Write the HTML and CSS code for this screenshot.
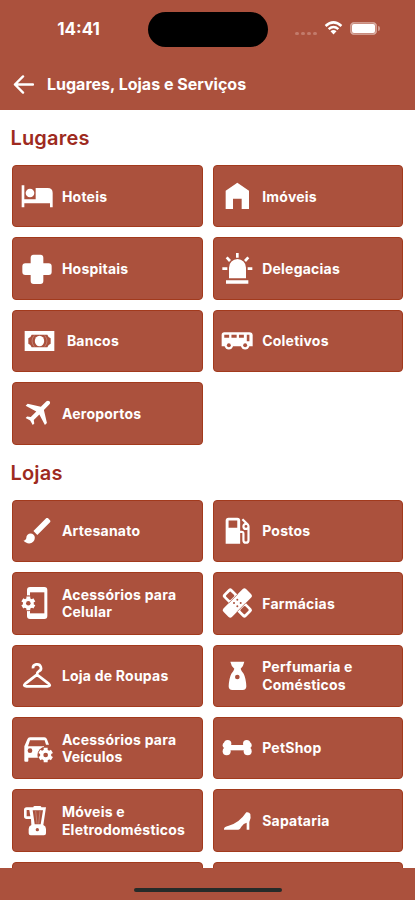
FILE: index.html
```html
<!DOCTYPE html>
<html lang="pt-BR">
<head>
    <meta charset="UTF-8" />
    <meta name="viewport" content="width=device-width, initial-scale=1" />
    <title>Lugares, Lojas e Serviços</title>
    <link rel="stylesheet" href="styles.css">
</head>
<body>
    <svg class="defs" width="0" height="0">
        <symbol id="gear" viewBox="-24 -24 48 48">
            <circle r="23" class="hole" />
            <g class="teeth">
                <path d="M0-20V20" />
                <path d="M-17.300-10L17.300 10" />
                <path d="M-17.300 10L17.300-10" />
            </g>
            <circle r="15.500" />
            <circle r="6.500" class="hole" />
        </symbol>
    </svg>

    <header>
        <div class="status">
            <span class="time">14:41</span>
            <span class="island"></span>
            <div class="signals">
                <span class="dots"><i></i><i></i><i></i><i></i></span>
                <svg class="wifi" viewBox="0 0 20 15">
                    <path d="M1.500 5.300Q10-2.300 18.500 5.300M4.800 8.700Q10 4.200 15.200 8.700" fill="none" stroke="#fff" stroke-width="2.700" />
                    <path d="M6.800 11Q10 8.300 13.200 11L10 14.500Z" />
                </svg>
                <span class="battery"></span>
            </div>
        </div>
        <div class="title-bar">
            <svg class="back" viewBox="0 0 22 20">
                <path d="M21 10H2M10.500 1.500L2 10l8.500 8.500" />
            </svg>
            <h1>Lugares, Lojas e Serviços</h1>
        </div>
    </header>

    <main>
        <h2>Lugares</h2>
        <div class="grid">
            <a class="card">
                <svg class="icon" viewBox="0 0 96 96"><path d="M2 16h8v42h34V24h36q15 0 15 15v43h-8V70H10v12H2Z" /><circle cx="27" cy="39" r="13" /></svg>
                <span>Hoteis</span>
            </a>
            <a class="card">
                <svg class="icon" viewBox="0 0 96 96"><path d="M14 32L49 8l35 24v55H62V56H36v31H14Z" /></svg>
                <span>Imóveis</span>
            </a>
            <a class="card">
                <svg class="icon" viewBox="0 0 96 96"><path d="M38 5h20q9 0 9 9v17h16q9 0 9 9v17q0 9-9 9H67v18q0 9-9 9H38q-9 0-9-9V66H13q-9 0-9-9V40q0-9 9-9h16V14q0-9 9-9Z" /></svg>
                <span>Hospitais</span>
            </a>
            <a class="card">
                <svg class="icon" viewBox="0 0 96 96">
                    <path d="M15 82h67v10H15ZM24 76V44a25.500 26 0 0 1 51 0v32ZM45 0h8v14h-8ZM4 43h15v8H4ZM80 43h14v8H80Z" />
                    <path class="line" d="M17 13l10 11M82 13L72 24" />
                </svg>
                <span>Delegacias</span>
            </a>
            <a class="card">
                <svg class="icon wide" viewBox="0 0 111 96">
                    <path d="M11 18h89v60H11Z" />
                    <path class="hole" d="M32 29h47q3 9 10 11v16q-7 2-10 11H32q-3-9-10-11V40q7-2 10-11Z" />
                    <path class="thin faint" d="M40 31q-14 17 0 34M71 31q14 17 0 34" />
                    <ellipse cx="55.500" cy="48" rx="14" ry="16" />
                </svg>
                <span>Bancos</span>
            </a>
            <a class="card">
                <svg class="icon" viewBox="0 0 98 96">
                    <path d="M10 21h77q10 0 10 10v33H2V29q0-8 8-8Z" />
                    <circle cx="24" cy="61" r="13" /><circle cx="74" cy="61" r="13" />
                    <path class="hole" d="M10 29h15v9H10ZM32 29h16v9H32ZM55 29h15v9H55ZM79 29h8v20H79Z" />
                    <circle class="hole" cx="24" cy="61" r="6" /><circle class="hole" cx="74" cy="61" r="6" />
                </svg>
                <span>Coletivos</span>
            </a>
            <a class="card">
                <svg class="icon" viewBox="0 0 96 96"><path transform="translate(-3 -4) scale(4.300)" d="M20.560 3.910c.59.59.59 1.540 0 2.120l-3.890 3.890 2.120 9.190-1.410 1.420-3.880-7.430L9.600 17l.36 2.470-1.070 1.060-1.760-3.180-3.190-1.770L5 14.500l2.500.37L11.370 11 3.940 7.090l1.420-1.410 9.190 2.120 3.890-3.890c.56-.58 1.560-.58 2.120 0z" /></svg>
                <span>Aeroportos</span>
            </a>
        </div>

        <h2>Lojas</h2>
        <div class="grid">
            <a class="card">
                <svg class="icon" viewBox="0 0 96 96"><path transform="translate(-1 -4) scale(4.250)" d="M20.710 4.630l-1.340-1.340c-.37-.39-1.020-.39-1.410 0L9 12.250 11.750 15l8.960-8.960c.39-.39.39-1.040 0-1.410M7 14a3 3 0 0 0-3 3c0 1.310-1.160 2-2 2 .92 1.220 2.500 2 4 2a4 4 0 0 0 4-4 3 3 0 0 0-3-3z" /></svg>
                <span>Artesanato</span>
            </a>
            <a class="card">
                <svg class="icon" viewBox="0 0 96 96"><path transform="translate(-3.400 -5) scale(4.350)" d="M18 10a1 1 0 0 1-1-1 1 1 0 0 1 1-1 1 1 0 0 1 1 1 1 1 0 0 1-1 1m-6 0H6V5h6m7.770 2.230.01-.01-3.720-3.720L15 4.560l2.110 2.110C16.170 7 15.500 7.930 15.500 9a2.500 2.500 0 0 0 2.500 2.500c.36 0 .69-.08 1-.21v7.210a1 1 0 0 1-1 1 1 1 0 0 1-1-1V14a2 2 0 0 0-2-2h-1V5a2 2 0 0 0-2-2H6a2 2 0 0 0-2 2v16h10v-7.500h1.500v5A2.500 2.500 0 0 0 18 21a2.500 2.500 0 0 0 2.500-2.500V9c0-.69-.28-1.320-.73-1.770z" /></svg>
                <span>Postos</span>
            </a>
            <a class="card">
                <svg class="icon" viewBox="0 0 96 96">
                    <rect x="18" y="0" width="61" height="96" rx="9" />
                    <rect class="hole" x="27" y="16" width="43" height="63" />
                    <use href="#gear" x="-3" y="24" width="50" height="50" />
                </svg>
                <span>Acessórios para Celular</span>
            </a>
            <a class="card">
                <svg class="icon" viewBox="0 0 96 96">
                    <g transform="rotate(-45 49 48)"><rect x="1" y="30" width="96" height="36" rx="7" /></g>
                    <g transform="rotate(45 49 48)">
                        <rect x="1" y="30" width="96" height="36" rx="7" />
                        <path class="cut" d="M31 29v38M67 29v38" />
                        <rect class="hole" x="9" y="38" width="19" height="20" rx="3" />
                        <rect class="hole" x="70" y="38" width="19" height="20" rx="3" />
                    </g>
                    <g class="hole"><circle cx="49" cy="38" r="3" /><circle cx="39" cy="48" r="3" /><circle cx="59" cy="48" r="3" /><circle cx="49" cy="58" r="3" /></g>
                </svg>
                <span>Farmácias</span>
            </a>
            <a class="card">
                <svg class="icon" viewBox="0 0 96 96"><path class="line" d="M36 25a12 11 0 1 1 17 9q-5 3-5 10M48 44L14 70q-10 9 2 9h64q12 0 2-9Z" /></svg>
                <span>Loja de Roupas</span>
            </a>
            <a class="card">
                <svg class="icon" viewBox="0 0 96 96"><path d="M28 5h42q-2 12-11 21 2 8 9 15 7 14 8 38 0 11-11 11H34q-11 0-11-11 1-24 8-38 7-7 9-15Q30 17 28 5Z" /><circle class="hole" cx="49" cy="51" r="7" /></svg>
                <span>Perfumaria e Comésticos</span>
            </a>
            <a class="card">
                <svg class="icon" viewBox="0 0 96 96">
                    <path d="M10 43l9-21q2-6 8-6h43q6 0 8 6l6 16h-9l-4-13H27l-6 18h48v34H22v9q0 3-3 3h-6q-3 0-3-3Z" />
                    <circle class="hole" cx="27" cy="56" r="7" />
                    <use href="#gear" x="48" y="43" width="52" height="52" />
                </svg>
                <span>Acessórios para Veículos</span>
            </a>
            <a class="card">
                <svg class="icon" viewBox="0 0 96 96"><path d="M18 39h61v16H18Z" /><circle cx="20" cy="35" r="11" /><circle cx="17" cy="58" r="12" /><circle cx="77" cy="35" r="11" /><circle cx="80" cy="58" r="12" /><circle cx="14" cy="40" r="9" /><circle cx="83" cy="40" r="9" /></svg>
                <span>PetShop</span>
            </a>
            <a class="card">
                <svg class="icon" viewBox="0 0 96 96">
                    <path d="M37 7q0-4 4-4h16q4 0 4 4h14l-8 53q8 3 8 12v13q0 6-6 6H29q-6 0-6-6V72q0-9 8-12l-1-18H17q-8 0-8-8V15q0-8 8-8Z" />
                    <path class="hole" d="M17 15h8l3 19H17ZM35 16h31l-7 42H41Z" />
                    <path class="thin faint" d="M44 18l4 38M57 18l-4 38" />
                    <circle class="hole" cx="49" cy="74" r="5" />
                </svg>
                <span>Móveis e Eletrodomésticos</span>
            </a>
            <a class="card">
                <svg class="icon" viewBox="0 0 96 96"><path d="M9 74q-2-9 14-12 31-7 53-40 8-2 12 5 3 12-3 24v23h-8V53q-9 2-16 12-4 9-9 9Z" /></svg>
                <span>Sapataria</span>
            </a>
            <a class="card"></a>
            <a class="card"></a>
        </div>
    </main>

    <footer><span class="home"></span></footer>
</body>
</html>
```
FILE: styles.css
```css
* {
    box-sizing: border-box;
}

body {
    margin: 0;
    height: 900px;
    display: flex;
    flex-direction: column;
    overflow: hidden;
    background-color: #fff;
    color: #fff;
    font-family: Inter, "Liberation Sans", sans-serif;
}

.defs {
    display: none;
}

header {
    flex: none;
    height: 110px;
    background-color: #ab513d;
}

.status {
    height: 58px;
    display: grid;
    grid-template-columns: 148px 120px 1fr;
    align-items: center;
}

.time {
    padding-left: 9px;
    text-align: center;
    font-size: 17px;
    font-weight: 700;
}

.island {
    height: 35px;
    border-radius: 18px;
    background-color: #000;
}

.signals {
    display: flex;
    align-items: center;
    padding-left: 27px;
}

.dots {
    display: flex;
    gap: 2.500px;
    margin: 9px 7px 0 0;
}

.dots i {
    width: 3.500px;
    height: 3.500px;
    border-radius: 50%;
    background-color: #c27b6b;
}

.wifi {
    width: 19px;
    height: 14px;
    margin: -2px 7px 0 0;
    fill: #fff;
}

.battery {
    width: 27px;
    height: 13px;
    margin-top: -1px;
    border: 1px solid #d09a8d;
    border-radius: 4px;
    background-color: #fff;
    box-shadow: inset 0 0 0 1px #c98c7e;
}

.battery::after {
    content: "";
    display: block;
    width: 2px;
    height: 5px;
    margin: 3px 0 0 27px;
    border-radius: 0 2px 2px 0;
    background-color: #d09a8d;
}

.title-bar {
    height: 52px;
    display: flex;
    align-items: center;
    padding-left: 13px;
}

.back {
    width: 21px;
    height: 19px;
    margin-right: 13px;
    fill: none;
    stroke: #fff;
    stroke-width: 2.500;
    stroke-linecap: round;
    stroke-linejoin: round;
}

h1 {
    margin: 0;
    font-size: 16px;
    font-weight: 700;
}

main {
    flex: 1;
    min-height: 0;
    overflow: hidden;
    padding: 0 12px 0 12.400px;
}

h2 {
    height: 55.100px;
    margin: 0 0 0 -2px;
    color: #9e2a20;
    font-size: 20px;
    font-weight: 600;
    line-height: 57px;
    letter-spacing: 0.200px;
}

.grid {
    display: grid;
    grid-template-columns: 1fr 1fr;
    grid-auto-rows: 62.400px;
    gap: 10px;
}

.card {
    display: flex;
    align-items: center;
    padding-left: 7.500px;
    border: 1px solid #a23a1d;
    border-radius: 4px;
    background-color: #ab513d;
    font-size: 14px;
    font-weight: 700;
    line-height: 17.500px;
    letter-spacing: 0.220px;
}

.card span {
    width: 130px;
}

.icon {
    flex: none;
    width: 32px;
    height: 32px;
    margin-right: 9px;
    fill: #fff;
}

.icon.wide {
    width: 37px;
}

.hole {
    fill: #ab513d;
}

.line,
.thin,
.teeth {
    fill: none;
    stroke: #fff;
    stroke-width: 8;
}

.thin {
    stroke-width: 2;
}

.faint {
    opacity: 0.400;
}

.teeth {
    stroke-width: 11;
}

.cut {
    fill: none;
    stroke: #ab513d;
    stroke-width: 2;
}

footer {
    flex: none;
    height: 32px;
    display: flex;
    justify-content: center;
    align-items: flex-end;
    padding-bottom: 8px;
    background-color: #ab513d;
}

.home {
    width: 148px;
    height: 4px;
    border-radius: 2px;
    background-color: #252b29;
}
```
